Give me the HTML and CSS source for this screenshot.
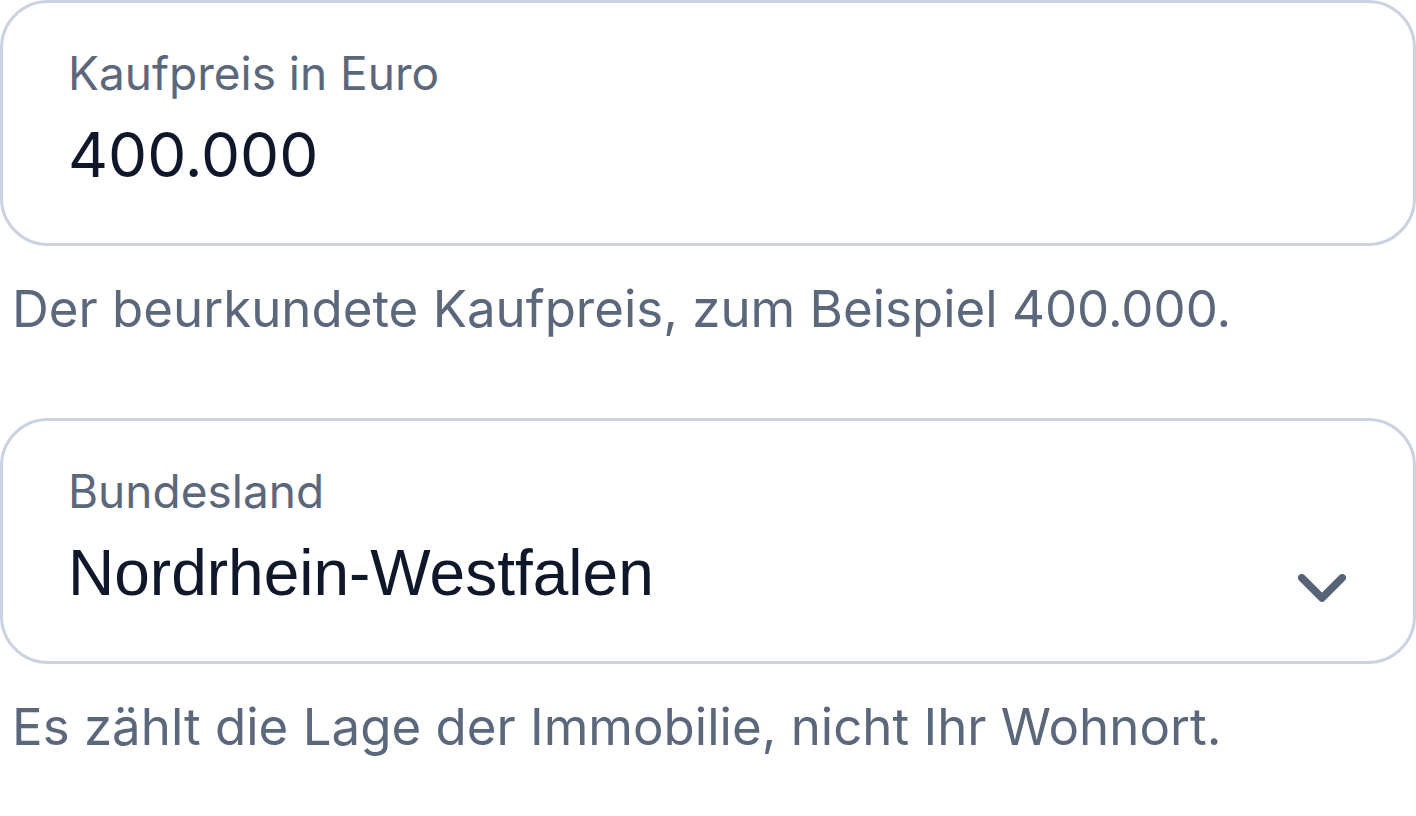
FILE: index.html
```html
<!DOCTYPE html>
<html lang="de">
<head>
<meta charset="utf-8">
<title>Grunderwerbsteuer</title>
<link rel="stylesheet" href="styles.css">
</head>
<body>
<main class="form">
  <div class="group">
    <label class="field" for="price">
      <span class="field-label">Kaufpreis in Euro</span>
      <input class="field-input" id="price" type="text" value="400.000">
    </label>
    <p class="help">Der beurkundete Kaufpreis, zum Beispiel 400.000.</p>
  </div>
  <div class="group">
    <label class="field" for="state">
      <span class="field-label">Bundesland</span>
      <span class="select-row">
        <span class="select-value" id="state">Nordrhein-Westfalen</span>
        <svg class="chevron" width="48" height="30" viewBox="0 0 48 30" aria-hidden="true">
          <path d="M3.75 3.75 L24 24 L44.25 3.75" fill="none" stroke="#566276" stroke-width="7.5" stroke-linecap="round" stroke-linejoin="round"/>
        </svg>
      </span>
    </label>
    <p class="help">Es zählt die Lage der Immobilie, nicht Ihr Wohnort.</p>
  </div>
</main>
</body>
</html>
```

FILE: styles.css
```css
* { box-sizing: border-box; }
html, body { margin: 0; padding: 0; background: #ffffff; }
body { font-family: Inter, "Noto Sans", sans-serif; }
.form { display: flex; flex-direction: column; }
.group { display: flex; flex-direction: column; }
.field {
  display: flex;
  flex-direction: column;
  height: 246px;
  border: 3px solid #c9d2e1;
  border-radius: 48px;
  padding: 42px 67px 0 65px;
  background: #ffffff;
}
.field-label {
  font-size: 46px;
  line-height: 56px;
  color: #5b677b;
}
.field-input {
  display: block;
  margin-top: 18px;
  font-family: Inter, "Noto Sans", sans-serif;
  font-size: 62px;
  line-height: 72px;
  height: 72px;
  color: #0f172a;
  border: 0;
  padding: 0;
  outline: none;
  background: transparent;
  width: 100%;
}
.select-row {
  display: flex;
  align-items: flex-start;
  justify-content: space-between;
  margin-top: 18px;
}
.select-value {
  font-family: "Liberation Sans", Arial, sans-serif;
  font-size: 64px;
  line-height: 72px;
  color: #0f172a;
}
.chevron { flex: none; margin-top: 37px; }
.help {
  margin: 0;
  padding: 32px 0 0 12px;
  height: 172px;
  font-size: 51px;
  line-height: 62px;
  color: #5b677b;
}
```
